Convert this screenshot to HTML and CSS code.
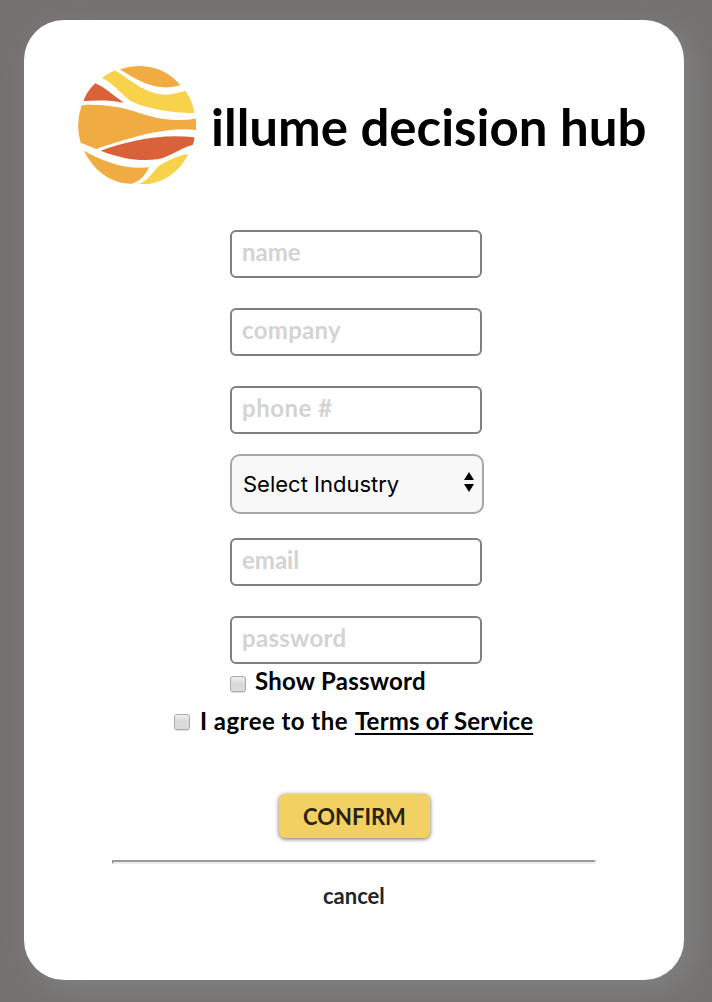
FILE: index.html
```html
<!DOCTYPE html>
<html lang="en">
<head>
<meta charset="utf-8">
<title>illume decision hub</title>
<link rel="stylesheet" href="styles.css">
</head>
<body>
<main class="card">
  <header class="brand">
    <svg class="logo" viewBox="24 32 354 354" aria-hidden="true">
      <path fill="#f1ab43" d="M150 42Q180 32 210 32C260 33 302 54 331 90Q306 97 282 96C230 94 190 67 150 42Z"/>
      <path fill="#f7d24a" d="M96 68Q114 54 135 45C176 71 220 110 270 117C296 121 321 113 346 106Q368 137 373 172C321 176 236 162 190 141C160 127 138 88 96 68Z"/>
      <path fill="#d96238" d="M76 84C108 98 132 123 162 142C122 134 82 134 40 137Q51 107 76 84Z"/>
      <path fill="#f1ab43" d="M35 150C86 145 149 153 205 172C262 191 318 200 378 190V224C311 214 218 236 160 255Q110 270 79 281L32 262Q15 206 35 150Z"/>
      <path fill="#d96238" d="M92 286C174 257 270 234 373 246Q374 258 368 269C331 277 305 303 266 311C210 321 145 307 92 286Z"/>
      <path fill="#f1ab43" d="M42 286C98 318 166 344 237 336C226 361 207 380 184 385C126 385 71 347 42 286Z"/>
      <path fill="#f7d24a" d="M203 386C232 379 246 352 264 334C290 316 323 301 355 296C327 355 265 394 203 386Z"/>
    </svg>
    <h1 class="title">illume decision hub</h1>
  </header>
  <form class="form">
    <input class="field name" type="text" placeholder="name">
    <input class="field company" type="text" placeholder="company">
    <input class="field phone" type="text" placeholder="phone #">
    <div class="select">
      <span>Select Industry</span>
      <svg class="arrows" viewBox="0 0 10 20" aria-hidden="true"><path d="M0 8L5 0l5 8zM0 12h10l-5 8z"/></svg>
    </div>
    <input class="field email" type="text" placeholder="email">
    <input class="field password" type="text" placeholder="password">
    <label class="check show"><i class="box"></i><span class="show-text">Show Password</span></label>
    <label class="check agree"><i class="box"></i><span class="agree-text">I agree to the</span><a class="terms">Terms of Service</a></label>
    <button class="confirm" type="button"><span>CONFIRM</span></button>
    <hr class="rule">
    <a class="cancel">cancel</a>
  </form>
</main>
</body>
</html>
```
FILE: styles.css
```css
* { box-sizing: border-box; }
body {
  margin: 0;
  height: 1002px;
  padding: 20px 28px 22px 24px;
  background: #757170;
  font-family: Lato, "Open Sans", sans-serif;
  font-weight: 700;
  color: #000;
  overflow: hidden;
}
.card {
  height: 960px;
  border-radius: 40px;
  background: #fff;
  box-shadow: 8px 8px 32px #808484;
}
.brand {
  display: flex;
  height: 210px;
  padding: 46px 0 0 54px;
}
.logo { width: 118px; height: 118px; flex: none; }
.title {
  margin: 30px 0 0 15px;
  font-size: 51px;
  line-height: 62px;
  font-weight: 700;
  white-space: nowrap;
}
.form { display: flex; flex-direction: column; }
.field {
  width: 252px;
  height: 48px;
  margin: 0 0 30px 206px;
  padding: 0 10px 6px;
  border: 2px solid #808080;
  border-radius: 6px;
  background: #fff;
  font: 700 24px Lato, sans-serif;
  outline: none;
}
.field::placeholder { color: #d3d3d3; opacity: 1; }
.company, .password { letter-spacing: .3px; }
.phone { margin-bottom: 20px; letter-spacing: .5px; }
.select {
  display: flex;
  align-items: center;
  justify-content: space-between;
  width: 254px;
  height: 60px;
  margin: 0 0 24px 206px;
  padding: 0 8px 0 11px;
  border: 2px solid #a6a6a6;
  border-radius: 10px;
  background: #f8f8f8;
  font: 400 22px Inter, sans-serif;
}
.arrows { width: 10px; height: 20px; margin-bottom: 4px; }
.password { margin-bottom: 0; }
.check {
  display: flex;
  align-items: center;
  height: 36px;
  font-size: 24px;
  line-height: 34px;
  white-space: nowrap;
}
.show { margin-left: 206px; }
.agree { height: 40px; margin-left: 150px; margin-top: 2px; }
.box {
  width: 16px;
  height: 16px;
  margin-top: 4px;
  border: 1px solid #aaa;
  border-radius: 3px;
  background: linear-gradient(#f0f0f0, #d8d8d8 50%, #dedede);
  box-shadow: 0 1px 1px #ddd;
}
.agree .box { margin-top: 0; }
.show-text { margin: 0 0 2px 9px; letter-spacing: .25px; }
.agree-text { margin: 0 0 2px 10px; letter-spacing: .45px; }
.terms {
  margin: 0 0 2px 7px;
  letter-spacing: .2px;
  text-decoration: underline;
  text-decoration-thickness: 2px;
  text-underline-offset: 3px;
  text-decoration-skip-ink: none;
}
.confirm {
  width: 151px;
  height: 44px;
  margin: 52px 0 0 255px;
  padding: 0;
  border: 0;
  border-radius: 6px;
  background: #f2d062;
  box-shadow: 0 1px 4px rgba(0, 0, 0, .6);
  color: #292411;
  font: 700 22px Lato, sans-serif;
}
.rule {
  width: 484px;
  height: 4px;
  margin: 22px 0 0 88px;
  border: 2px solid;
  border-color: #9a9a9a #eee #eee #9a9a9a;
}
.cancel {
  margin: 17px 0 0 299px;
  color: #212529;
  font-size: 22px;
  line-height: 30px;
}
```
